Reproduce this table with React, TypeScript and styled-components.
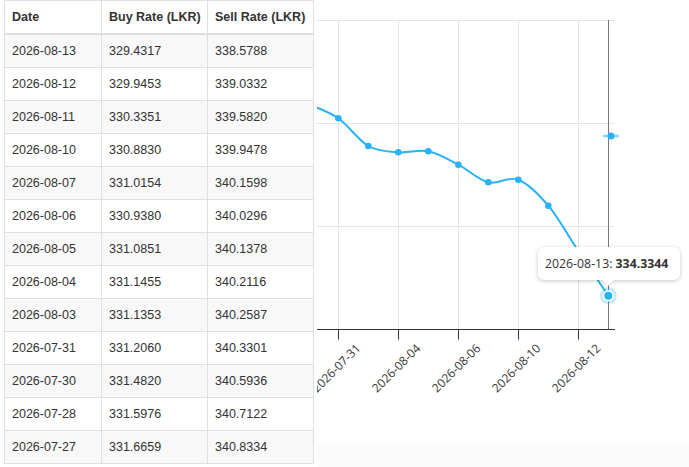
import React from 'react'
import styled, { createGlobalStyle } from 'styled-components'

const rates = [
  ['2026-08-13', '329.4317', '338.5788'],
  ['2026-08-12', '329.9453', '339.0332'],
  ['2026-08-11', '330.3351', '339.5820'],
  ['2026-08-10', '330.8830', '339.9478'],
  ['2026-08-07', '331.0154', '340.1598'],
  ['2026-08-06', '330.9380', '340.0296'],
  ['2026-08-05', '331.0851', '340.1378'],
  ['2026-08-04', '331.1455', '340.2116'],
  ['2026-08-03', '331.1353', '340.2587'],
  ['2026-07-31', '331.2060', '340.3301'],
  ['2026-07-30', '331.4820', '340.5936'],
  ['2026-07-28', '331.5976', '340.7122'],
  ['2026-07-27', '331.6659', '340.8334'],
]

// chart drawn in page coordinates, the svg viewBox starts where the panel starts
const PANEL_X = 316
const PLOT_RIGHT = 614
const GRID_Y = [20.5, 123.5, 226.5]
const AXIS_Y = 329.5
const TICKS = [
  { x: 337.5, label: '2026-07-31' },
  { x: 397.5, label: '2026-08-04' },
  { x: 457.5, label: '2026-08-06' },
  { x: 517.5, label: '2026-08-10' },
  { x: 577.5, label: '2026-08-12' },
]

const series: [number, number][] = [
  [277, 92],
  [307, 104],
  [337.3, 118.3],
  [367.3, 146],
  [397.3, 152.3],
  [427.3, 151.3],
  [457.3, 164.7],
  [487.3, 182.3],
  [517.3, 179.7],
  [547.3, 205.7],
  [577.3, 251],
  [607.3, 295.7],
]

const smoothPath = (pts: [number, number][]) => {
  let d = `M${pts[0][0]},${pts[0][1]}`
  for (let i = 0; i < pts.length - 1; i++) {
    const p0 = pts[i - 1] || pts[i]
    const p1 = pts[i]
    const p2 = pts[i + 1]
    const p3 = pts[i + 2] || p2
    const c1x = p1[0] + (p2[0] - p0[0]) / 6
    const c1y = p1[1] + (p2[1] - p0[1]) / 6
    const c2x = p2[0] - (p3[0] - p1[0]) / 6
    const c2y = p2[1] - (p3[1] - p1[1]) / 6
    d += ` C${c1x},${c1y} ${c2x},${c2y} ${p2[0]},${p2[1]}`
  }
  return d
}

const BLUE = '#2ab2f6'

export default function App() {
  const last = series[series.length - 1]

  return (
    <>
      <GlobalStyle />
      <Page>
        <RateTable>
          <colgroup>
            <col style={{ width: 97 }} />
            <col style={{ width: 106 }} />
            <col style={{ width: 106 }} />
          </colgroup>
          <thead>
            <tr>
              <HeadCell>Date</HeadCell>
              <HeadCell>Buy Rate (LKR)</HeadCell>
              <HeadCell>Sell Rate (LKR)</HeadCell>
            </tr>
          </thead>
          <tbody>
            {rates.map(([date, buy, sell], i) => (
              <Row key={date} $striped={i % 2 === 0}>
                <Cell>{date}</Cell>
                <Cell>{buy}</Cell>
                <Cell>{sell}</Cell>
              </Row>
            ))}
          </tbody>
        </RateTable>

        <ChartPanel>
          <ChartSvg viewBox={`${PANEL_X} 0 373 443`} width={373} height={443}>
            {GRID_Y.map((y) => (
              <line key={y} x1={PANEL_X} x2={PLOT_RIGHT} y1={y} y2={y} stroke="#e5e5e5" />
            ))}
            {TICKS.map((t) => (
              <line key={t.x} x1={t.x} x2={t.x} y1={20} y2={AXIS_Y} stroke="#e5e5e5" />
            ))}

            <line x1={607.5} x2={607.5} y1={20} y2={AXIS_Y} stroke="#777" />
            <line x1={PANEL_X} x2={PLOT_RIGHT} y1={AXIS_Y} y2={AXIS_Y} stroke="#333" />
            {TICKS.map((t) => (
              <line key={t.x} x1={t.x} x2={t.x} y1={AXIS_Y} y2={339.5} stroke="#333" />
            ))}

            <path d={smoothPath(series)} fill="none" stroke={BLUE} strokeWidth={2} />
            {series.slice(0, -1).map(([x, y]) => (
              <circle key={x} cx={x} cy={y} r={3.3} fill={BLUE} />
            ))}

            <line x1={602} x2={618} y1={136} y2={136} stroke={BLUE} strokeOpacity={0.55} strokeWidth={2.5} />
            <circle cx={610} cy={136} r={3.5} fill={BLUE} />

            <circle cx={last[0]} cy={last[1]} r={8.5} fill={BLUE} fillOpacity={0.28} />
            <circle cx={last[0]} cy={last[1]} r={4.8} fill={BLUE} stroke="#fff" strokeWidth={1.5} />

            {TICKS.map((t) => (
              <TickLabel
                key={t.label}
                x={t.x - 2.5}
                y={368}
                textAnchor="middle"
                dominantBaseline="central"
                transform={`rotate(-45 ${t.x - 2.5} 368)`}
              >
                {t.label}
              </TickLabel>
            ))}
          </ChartSvg>
          <ScrollTrack />

          <Tooltip>
            2026-08-13: <b>334.3344</b>
          </Tooltip>
        </ChartPanel>
      </Page>
    </>
  )
}

const GlobalStyle = createGlobalStyle`
  body {
    margin: 0;
    background: #fff;
    font-family: 'Liberation Sans', Arial, sans-serif;
  }
`

const Page = styled.div`
  display: flex;
  align-items: flex-start;
  width: 689px;
  height: 467px;
  padding-left: 4px;
  box-sizing: border-box;
  overflow: hidden;
`

const RateTable = styled.table`
  width: 309px;
  table-layout: fixed;
  border-collapse: collapse;
  border: 1px solid #dedede;
  font-size: 12.5px;
  color: #333;
  flex-shrink: 0;
`

const HeadCell = styled.th`
  text-align: left;
  font-weight: 700;
  line-height: 16px;
  padding: 8px 7px;
  border: 1px solid #e0e0e0;
  border-bottom: 2px solid #dedede;
  background: #fff;
  white-space: nowrap;
`

const Row = styled.tr<{ $striped: boolean }>`
  background: ${(p) => (p.$striped ? '#f8f8f8' : '#fff')};
`

const Cell = styled.td`
  line-height: 16px;
  padding: 8px 7px;
  border: 1px solid #e0e0e0;
  white-space: nowrap;
`

const ChartPanel = styled.div`
  position: relative;
  display: flex;
  flex-direction: column;
  width: 373px;
  margin-left: 3px;
  flex-shrink: 0;
`

const ChartSvg = styled.svg`
  display: block;
  overflow: hidden;
`

const TickLabel = styled.text`
  font-family: 'Open Sans', 'Noto Sans', sans-serif;
  font-size: 12px;
  fill: #373737;
`

const ScrollTrack = styled.div`
  height: 24px;
  background: #fbfbfb;
`

const Tooltip = styled.div`
  position: absolute;
  left: 221px;
  top: 247px;
  width: 142px;
  height: 33px;
  box-sizing: border-box;
  display: flex;
  align-items: center;
  padding-left: 7px;
  background: #fff;
  border-radius: 6px;
  box-shadow: 0 1px 4px rgba(0, 0, 0, 0.22);
  font-family: 'Open Sans', 'Noto Sans', sans-serif;
  font-size: 12.3px;
  color: #333;
  white-space: pre;

  b {
    font-weight: 700;
  }

  &::after {
    content: '';
    position: absolute;
    left: 64px;
    bottom: -6px;
    border-left: 6px solid transparent;
    border-right: 6px solid transparent;
    border-top: 6px solid #fff;
    filter: drop-shadow(0 1px 1px rgba(0, 0, 0, 0.12));
  }
`
